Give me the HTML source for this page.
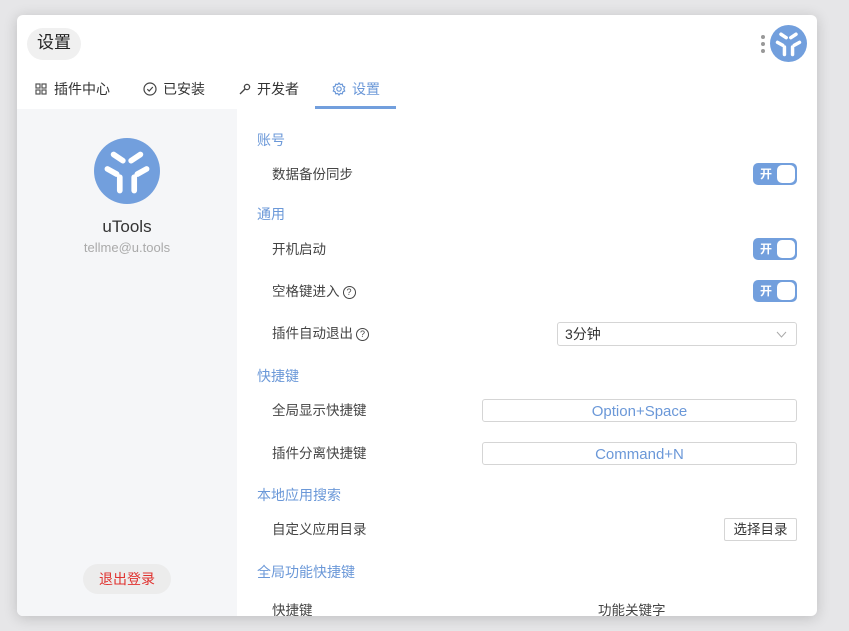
<!DOCTYPE html>
<html><head><meta charset="utf-8"><style>
*{margin:0;padding:0;box-sizing:border-box}
body{width:849px;height:631px;background:#e6e6e8;position:relative;overflow:hidden;font-family:"Liberation Sans","Noto Sans CJK SC",sans-serif;color:#333}
.win{position:absolute;left:17px;top:15px;width:800px;height:601px;background:#fff;border-radius:6px;overflow:hidden;box-shadow:0 2px 14px rgba(0,0,0,.18)}
.a{position:absolute;white-space:nowrap}
.title{left:10px;top:13px;height:32px;padding:0 10px;background:#f0f0f0;border-radius:16px;font-size:17px;line-height:30px;color:#222}
.tab{top:65px;font-size:14px;color:#333;line-height:18px}
.left{position:absolute;left:0;top:94px;width:220px;height:507px;background:#f5f6f8}
.sec{font-size:14px;color:#6b98d8;left:240px}
.lbl{font-size:13.5px;color:#444;left:255px}
.tg{left:736px;width:44px;height:22px;background:#729fdd;border-radius:5px}
.tg span{position:absolute;left:7px;top:2px;color:#fff;font-size:12px;line-height:18px;font-weight:bold}
.tg i{position:absolute;right:2px;top:2px;width:18px;height:18px;background:#fff;border-radius:5px}
.inp{left:465px;width:315px;height:23px;border:1px solid #d5d5d5;border-radius:3px;text-align:center;color:#6b98d8;font-size:15px;line-height:23px}
.q{display:inline-block;width:13px;height:13px;border:1.2px solid #444;border-radius:50%;font-size:9px;line-height:11px;text-align:center;vertical-align:1px;margin-left:3px}
</style></head><body>
<div class="win">
<div class="a title">设置</div>
<div class="a" style="left:744px;top:20px;width:4px">
<div style="width:4px;height:4px;border-radius:2px;background:#999;margin-bottom:3px"></div>
<div style="width:4px;height:4px;border-radius:2px;background:#999;margin-bottom:3px"></div>
<div style="width:4px;height:4px;border-radius:2px;background:#999"></div></div>
<svg class="a" style="left:753px;top:10px" width="37" height="37" viewBox="0 0 64 64"><circle cx="32" cy="32" r="32" fill="#729fdd"/><g stroke="#fff" stroke-width="6" stroke-linecap="round" fill="none"><path d="M19 16L28 22"/><path d="M36 22L45 16"/><path d="M13 30L22 35M25 38V51"/><path d="M51 30L42 35M39 38V51"/></g></svg>
<svg class="a" style="left:18px;top:68px" width="12" height="12" viewBox="0 0 12 12" fill="none" stroke="#555" stroke-width="1.2"><rect x="1" y="1" width="4" height="4"/><rect x="7" y="1" width="4" height="4"/><rect x="1" y="7" width="4" height="4"/><rect x="7" y="7" width="4" height="4"/></svg>
<div class="a tab" style="left:37px">插件中心</div>
<svg class="a" style="left:126px;top:67px" width="14" height="14" viewBox="0 0 14 14" fill="none" stroke="#444" stroke-width="1.2"><circle cx="7" cy="7" r="6"/><path d="M4.3 7.2L6.2 9L9.8 5"/></svg>
<div class="a tab" style="left:146px">已安装</div>
<svg class="a" style="left:221px;top:68px" width="13" height="13" viewBox="0 0 13 13" fill="none" stroke="#444" stroke-width="1.3"><path d="M2 11L7 6"/><circle cx="9" cy="4" r="2.6"/></svg>
<div class="a tab" style="left:240px">开发者</div>
<svg class="a" style="left:315px;top:67px" width="14" height="14" viewBox="0 0 14 14" fill="none" stroke="#6b98d8" stroke-width="1.2"><circle cx="7" cy="7" r="2.2"/><path d="M7 1L8.3 2.6L10.3 2.2L10.8 4.2L12.7 5L11.8 7L12.7 9L10.8 9.8L10.3 11.8L8.3 11.4L7 13L5.7 11.4L3.7 11.8L3.2 9.8L1.3 9L2.2 7L1.3 5L3.2 4.2L3.7 2.2L5.7 2.6Z"/></svg>
<div class="a tab" style="left:335px;color:#6b98d8">设置</div>
<div class="a" style="left:298px;top:91px;width:81px;height:3px;background:#729fdd"></div>
<div class="left">
<svg class="a" style="left:77px;top:29px" width="66" height="66" viewBox="0 0 64 64"><circle cx="32" cy="32" r="32" fill="#729fdd"/><g stroke="#fff" stroke-width="5.5" stroke-linecap="round" fill="none"><path d="M19 16L28 22"/><path d="M36 22L45 16"/><path d="M13 30L22 35M25 38V51"/><path d="M51 30L42 35M39 38V51"/></g></svg>
<div class="a" style="left:0;width:220px;text-align:center;top:108px;font-size:17px;color:#333">uTools</div>
<div class="a" style="left:0;width:220px;text-align:center;top:131px;font-size:13px;color:#aaa">tellme@u.tools</div>
<div class="a" style="left:66px;top:455px;width:88px;height:30px;border-radius:15px;background:#ececec;color:#e0322f;font-size:14px;line-height:30px;text-align:center">退出登录</div>
</div>
<div class="a sec" style="top:115px">账号</div>
<div class="a lbl" style="top:148px">数据备份同步</div>
<div class="a tg" style="top:148px"><span>开</span><i></i></div>
<div class="a sec" style="top:189px">通用</div>
<div class="a lbl" style="top:223px">开机启动</div>
<div class="a tg" style="top:223px"><span>开</span><i></i></div>
<div class="a lbl" style="top:265px">空格键进入<span class="q">?</span></div>
<div class="a tg" style="top:265px"><span>开</span><i></i></div>
<div class="a lbl" style="top:307px">插件自动退出<span class="q">?</span></div>
<div class="a" style="left:540px;top:307px;width:240px;height:24px;border:1px solid #d5d5d5;border-radius:3px;font-size:14px;line-height:22px;padding-left:7px;color:#333">3分钟<svg style="position:absolute;right:9px;top:8px" width="11" height="7" viewBox="0 0 11 7" fill="none" stroke="#aaa"><path d="M1 1L5.5 6L10 1"/></svg></div>
<div class="a sec" style="top:351px">快捷键</div>
<div class="a lbl" style="top:384px">全局显示快捷键</div>
<div class="a inp" style="top:384px">Option+Space</div>
<div class="a lbl" style="top:427px">插件分离快捷键</div>
<div class="a inp" style="top:427px">Command+N</div>
<div class="a sec" style="top:470px">本地应用搜索</div>
<div class="a lbl" style="top:503px">自定义应用目录</div>
<div class="a" style="left:707px;top:503px;width:73px;height:23px;border:1px solid #d5d5d5;border-radius:2px;font-size:13.5px;line-height:21px;text-align:center">选择目录</div>
<div class="a sec" style="top:547px">全局功能快捷键</div>
<div class="a lbl" style="top:584px">快捷键</div>
<div class="a lbl" style="left:581px;top:584px">功能关键字</div>
</div>
</body></html>
